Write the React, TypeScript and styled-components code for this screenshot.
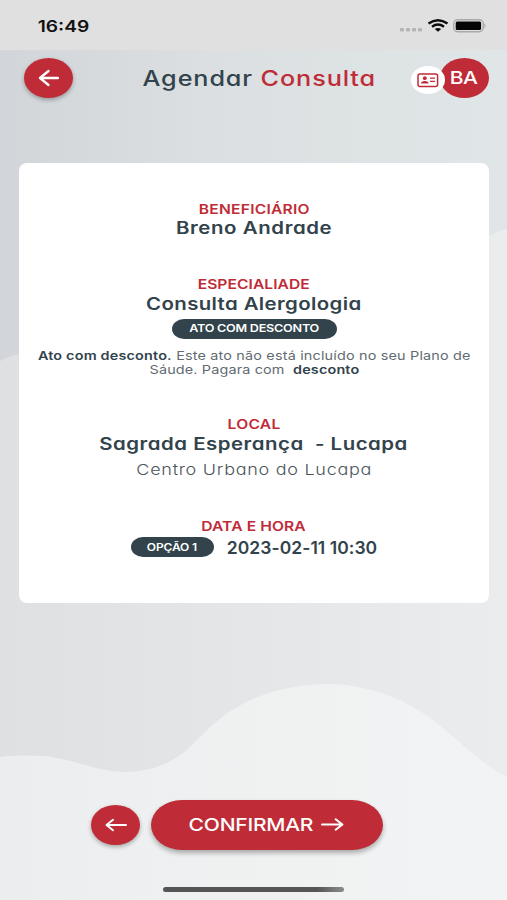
import React from 'react';
import styled, { createGlobalStyle } from 'styled-components';

const RED = '#bf2c37';
const SLATE = '#32434c';

const GlobalStyle = createGlobalStyle`
  * { box-sizing: border-box; }
  body { margin: 0; font-family: Inter, 'Liberation Sans', sans-serif; }
`;

const Screen = styled.main`
  position: relative;
  isolation: isolate;
  width: 507px;
  height: 900px;
  overflow: hidden;
  display: flex;
  flex-direction: column;
  align-items: center;
`;

const Backdrop = styled.svg`
  position: absolute;
  inset: 0;
  z-index: -1;
`;

const Text = styled.span<{ $size: number; $weight?: number; $spacing?: number; $color?: string; $stretch?: number }>`
  display: inline-block;
  white-space: pre;
  font-size: ${p => p.$size}px;
  font-weight: ${p => p.$weight ?? 600};
  letter-spacing: ${p => p.$spacing ?? 0}px;
  color: ${p => p.$color ?? SLATE};
  font-feature-settings: 'cv11';
  transform: scaleX(${p => p.$stretch ?? 1.2});
`;

const Accent = styled.span`
  color: ${RED};
`;

const Strong = styled.strong`
  font-weight: 600;
  color: ${SLATE};
`;

const StatusBar = styled.div`
  width: 100%;
  height: 50px;
  padding: 2px 21px 0 42px;
  background: #e0e0e0;
  display: flex;
  align-items: center;
  justify-content: space-between;
`;

const StatusIcons = styled.svg`
  display: block;
`;

const Header = styled.header`
  width: 100%;
  height: 56px;
  padding: 0 18px 0 24px;
  display: flex;
  align-items: center;
  justify-content: space-between;
`;

const RoundButton = styled.button`
  width: 49px;
  height: 40px;
  padding: 0;
  border: 0;
  border-radius: 50%;
  background: ${RED};
  color: #fff;
  display: flex;
  align-items: center;
  justify-content: center;
  font-family: inherit;
  box-shadow: 0 2px 4px rgba(0, 0, 0, 0.3);
`;

const Title = styled.h1`
  flex: 1;
  margin: 0 0 2px 34px;
  text-align: center;
  line-height: 40px;
`;

const Account = styled.div`
  display: flex;
  align-items: center;
`;

const CardBadge = styled.div`
  position: relative;
  z-index: 1;
  width: 34px;
  height: 28px;
  margin: 4px -5px 0 0;
  border-radius: 50%;
  background: #fff;
  display: flex;
  align-items: center;
  justify-content: center;
`;

const Avatar = styled.div`
  width: 49px;
  height: 40px;
  padding: 0 2px 2px 0;
  border-radius: 50%;
  background: ${RED};
  display: flex;
  align-items: center;
  justify-content: center;
`;

const Card = styled.section`
  width: 470px;
  height: 440px;
  margin: 57px 0 0 1px;
  padding-top: 37px;
  border-radius: 8px;
  background: #fff;
  display: flex;
  flex-direction: column;
  gap: 37px;
`;

const Group = styled.div`
  display: flex;
  flex-direction: column;
  align-items: center;
`;

const Line = styled.div<{ $height: number; $top?: number }>`
  height: ${p => p.$height}px;
  line-height: ${p => p.$height}px;
  margin-top: ${p => p.$top ?? 0}px;
  display: flex;
  justify-content: center;
`;

const Pill = styled.div<{ $width: number }>`
  width: ${p => p.$width}px;
  height: 20px;
  line-height: 20px;
  border-radius: 12px / 10px;
  background: ${SLATE};
  display: flex;
  justify-content: center;
`;

const Note = styled.p`
  margin: 10px 0 1px;
  line-height: 14px;
  display: flex;
  flex-direction: column;
  align-items: center;
`;

const NoteText = styled(Text)`
  font-feature-settings: normal;
`;

const Schedule = styled.div`
  margin-top: 2px;
  display: flex;
  align-items: center;
  gap: 13px;
  height: 20px;
  line-height: 19px;
`;

const Actions = styled.div`
  margin-top: 197px;
  padding-right: 33px;
  display: flex;
  align-items: center;
  gap: 11px;
`;

const ConfirmButton = styled.button`
  width: 232px;
  height: 50px;
  padding: 0 0 2px 9px;
  border: 0;
  border-radius: 31px / 25px;
  background: ${RED};
  font-family: inherit;
  display: flex;
  align-items: center;
  justify-content: center;
  gap: 18px;
  box-shadow: 0 3px 5px rgba(0, 0, 0, 0.3);
`;

const HomeIndicator = styled.div`
  width: 181px;
  height: 5px;
  margin-top: 37px;
  border-radius: 3px;
  background: linear-gradient(90deg, #555 0 85%, #8c8c8c);
`;

const Arrow = ({ forward = false, width = 22 }: { forward?: boolean; width?: number }) => (
  <svg width={width} height="18" viewBox="0 0 22 18" preserveAspectRatio="none" fill="none" stroke="#fff" strokeWidth="2" strokeLinecap="round" strokeLinejoin="round">
    <path d={forward ? 'M1 9.5H20M14 4.3L20.5 9.5L14 14.7' : 'M21 9H2M8 3.8L1.5 9L8 14.2'} />
  </svg>
);

const BackArrow = () => (
  <svg width="22" height="18" viewBox="0 0 22 18" fill="none" stroke="#fff" strokeWidth="2.3" strokeLinecap="round" strokeLinejoin="round">
    <path d="M20 9H2M10.5 2L2 9L10.5 16" />
  </svg>
);

export default function App() {
  return (
    <>
      <GlobalStyle />
      <Screen>
        <Backdrop width="507" height="900" viewBox="0 0 507 900">
          <defs>
            <linearGradient id="top">
              <stop offset="0" stopColor="#d2d5d9" />
              <stop offset="0.4" stopColor="#dbdfe1" />
              <stop offset="1" stopColor="#e0e6e7" />
            </linearGradient>
            <linearGradient id="middle">
              <stop offset="0" stopColor="#dfe0e2" />
              <stop offset="1" stopColor="#eaecee" />
            </linearGradient>
            <linearGradient id="bottom">
              <stop offset="0" stopColor="#ecedef" />
              <stop offset="0.6" stopColor="#f0f2f2" />
              <stop offset="1" stopColor="#f2f3f5" />
            </linearGradient>
          </defs>
          <path fill="url(#top)" d="M0 0H507V900H0Z" />
          <path fill="url(#middle)" d="M0 361C5 358 12 356 20 354C120 340 330 300 488 236Q498 231 507 229V900H0Z" />
          <path fill="url(#bottom)" d="M0 757C20 755 42 755 56 758C85 763 100 772 126 772C153 771 170 764 188 749C204 733 214 722 232 710C258 693 295 684 328 684C363 684 404 697 434 721C462 743 481 764 507 777V900H0Z" />
        </Backdrop>

        <StatusBar>
          <Text $size={16} $color="#111">16:49</Text>
          <StatusIcons width="88" height="18" viewBox="0 0 88 18">
            <g fill="#b5b5b5">
              <rect x="2" y="11" width="4" height="3.5" rx="1" />
              <rect x="8" y="11" width="4" height="3.5" rx="1" />
              <rect x="14" y="11" width="4" height="3.5" rx="1" />
              <rect x="20" y="11" width="4" height="3.5" rx="1" />
            </g>
            <g fill="none" stroke="#0b0b0b" strokeWidth="2.4">
              <path d="M30.5 6.6Q40 -0.2 49.5 6.6" />
              <path d="M34 9.8Q40 5.4 46 9.8" />
            </g>
            <path fill="#0b0b0b" d="M36.8 12Q40 9.8 43.2 12L40 14.8Z" />
            <rect x="55.7" y="2.7" width="29.6" height="12" rx="4" fill="none" stroke="#a9a9a9" strokeWidth="1.4" />
            <rect x="57.7" y="4.5" width="25.4" height="8.4" rx="1.5" fill="#050505" />
            <path d="M86.5 6.5Q88.5 8.7 86.5 11Z" fill="#a0a0a0" />
          </StatusIcons>
        </StatusBar>

        <Header>
          <RoundButton aria-label="Voltar"><BackArrow /></RoundButton>
          <Title>
            <Text $size={21} $weight={500} $spacing={0.75}>Agendar <Accent>Consulta</Accent></Text>
          </Title>
          <Account>
            <CardBadge>
              <svg width="22" height="15" viewBox="0 0 22 15">
                <rect x="1" y="1" width="19.6" height="12.6" rx="2" fill="none" stroke={RED} strokeWidth="1.5" />
                <circle cx="7.8" cy="5.2" r="1.9" fill={RED} />
                <path d="M4 10.6Q4 8 7.8 8Q11.6 8 11.6 10.6Z" fill={RED} />
                <path d="M13 5.2H18M13 8.3H18" stroke={RED} strokeWidth="1.3" />
              </svg>
            </CardBadge>
            <Avatar><Text $size={17.5} $weight={500} $color="#fff" $spacing={-0.3}>BA</Text></Avatar>
          </Account>
        </Header>

        <Card>
          <Group>
            <Line $height={18}><Text $size={13} $color={RED} $spacing={0.2}>BENEFICIÁRIO</Text></Line>
            <Line $height={20}><Text $size={17} $spacing={0.5}>Breno Andrade</Text></Line>
          </Group>
          <Group>
            <Line $height={18}><Text $size={13} $color={RED} $spacing={0.05}>ESPECIALIADE</Text></Line>
            <Line $height={20} $top={1}><Text $size={17} $spacing={0.32}>Consulta Alergologia</Text></Line>
            <Line $height={20} $top={5}>
              <Pill $width={165}><Text $size={10.5} $color="#fff" $spacing={-0.2}>ATO COM DESCONTO</Text></Pill>
            </Line>
            <Note>
              <NoteText $size={12} $weight={400} $spacing={0.15} $color="#626b71"><Strong>Ato com desconto.</Strong> Este ato não está incluído no seu Plano de</NoteText>
              <NoteText $size={12} $weight={400} $spacing={0.13} $color="#626b71">Sáude. Pagara com  <Strong>desconto</Strong></NoteText>
            </Note>
          </Group>
          <Group>
            <Line $height={18}><Text $size={13} $color={RED} $spacing={0.2}>LOCAL</Text></Line>
            <Line $height={20} $top={1}><Text $size={17} $spacing={0.43}>Sagrada Esperança  - Lucapa</Text></Line>
            <Line $height={20} $top={6}><Text $size={15} $weight={300} $spacing={0.6} $color="#4c555b">Centro Urbano do Lucapa</Text></Line>
          </Group>
          <Group>
            <Line $height={18}><Text $size={13} $color={RED} $spacing={0.08}>DATA E HORA</Text></Line>
            <Schedule>
              <Pill $width={83}><Text $size={10} $color="#fff" $spacing={-0.1}>OPÇÃO 1</Text></Pill>
              <Text $size={17.5} $stretch={1} $spacing={0.05}>2023-02-11 10:30</Text>
            </Schedule>
          </Group>
        </Card>

        <Actions>
          <RoundButton aria-label="Anterior"><Arrow /></RoundButton>
          <ConfirmButton>
            <Text $size={17.5} $weight={500} $spacing={-0.2} $color="#fff">CONFIRMAR</Text>
            <Arrow forward width={23} />
          </ConfirmButton>
        </Actions>
        <HomeIndicator />
      </Screen>
    </>
  );
}
